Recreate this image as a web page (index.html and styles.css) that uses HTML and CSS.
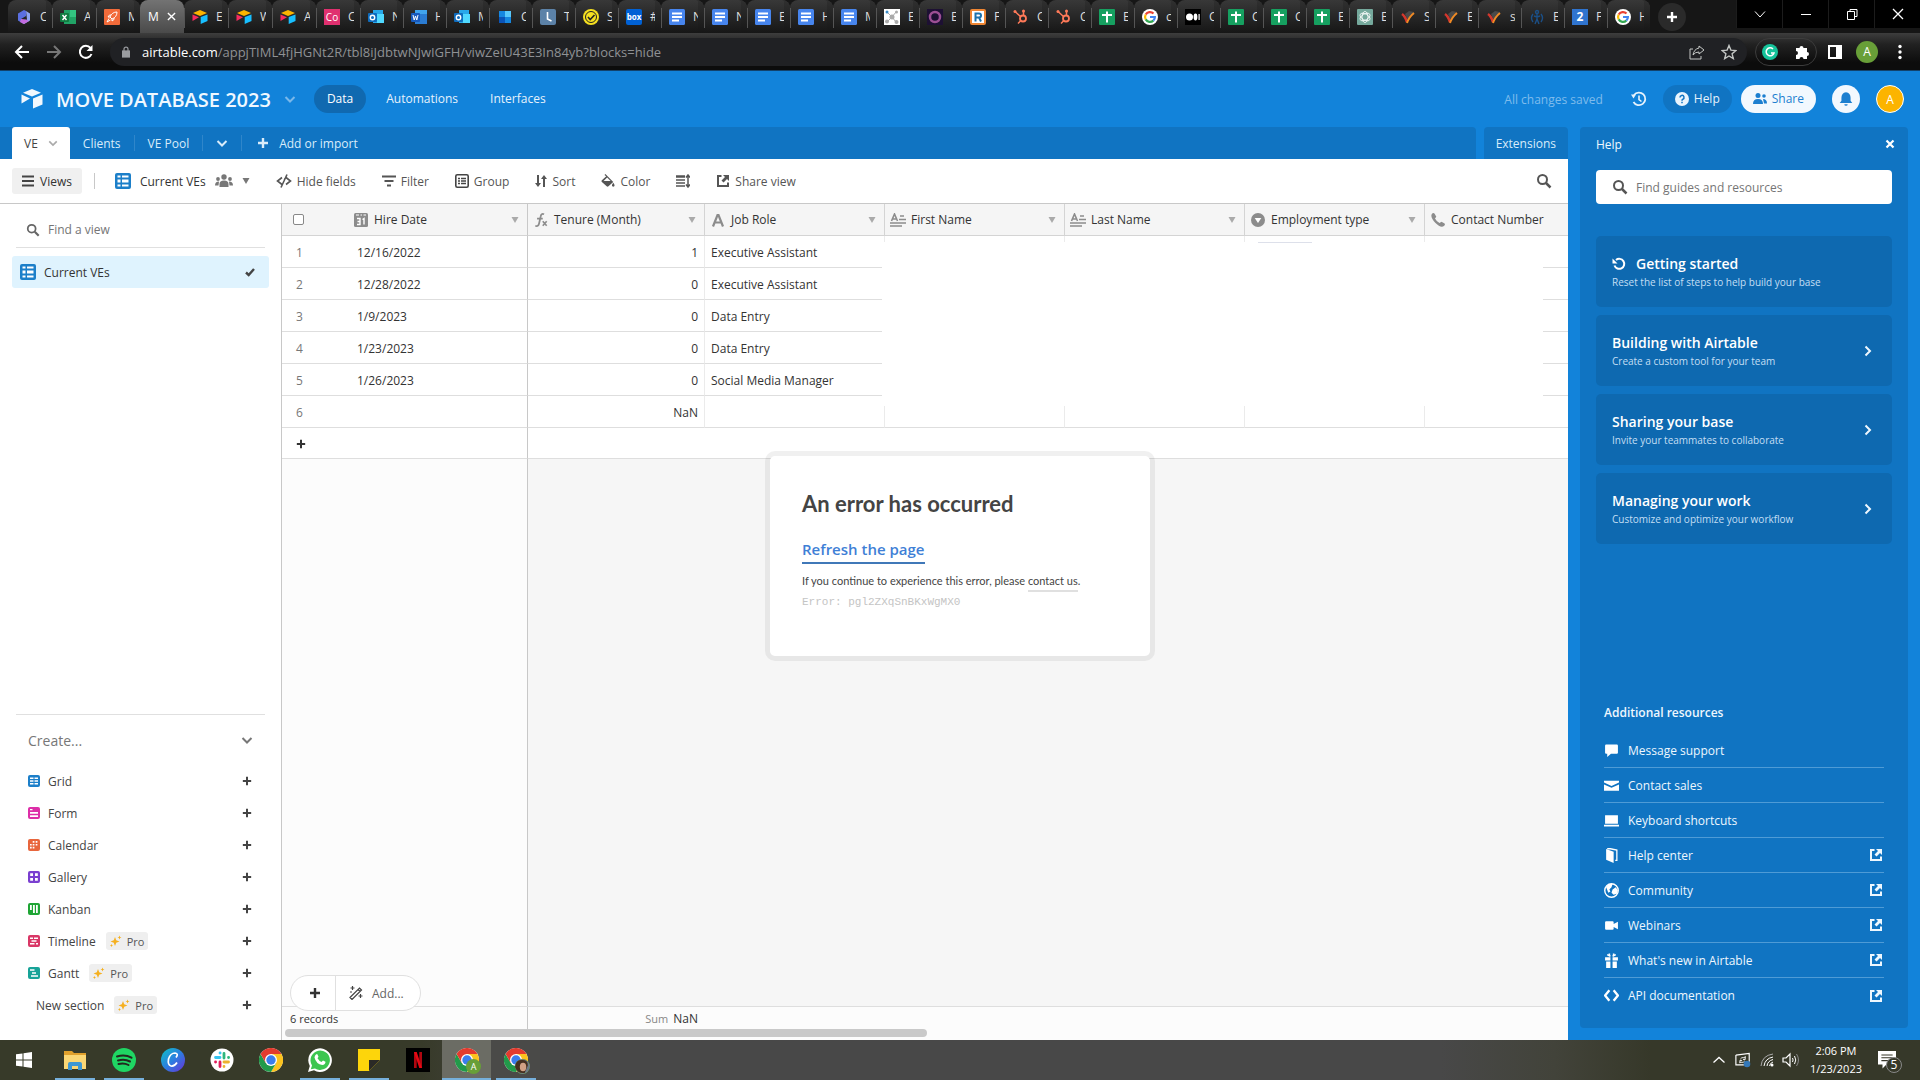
FILE: index.html
```html
<!DOCTYPE html>
<html lang="en">
<head>
    <meta charset="UTF-8">
    <meta name="viewport" content="width=device-width, initial-scale=1.0">
    <title>MOVE DATABASE 2023: VE - Airtable</title>
    <link rel="stylesheet" href="styles.css">
</head>
<body>
    <!-- shared icons -->
    <svg class="sprite" aria-hidden="true">
        <symbol id="i-chevron" viewBox="0 0 12 12"><path d="M1.5 4 6 8.500 10.500 4" fill="none" stroke="currentColor" stroke-width="2"/></symbol>
        <symbol id="i-caret" viewBox="0 0 8 8"><path d="M.5 1h7L4 7z" fill="currentColor"/></symbol>
        <symbol id="i-plus" viewBox="0 0 12 12"><path d="M6 1v10M1 6h10" stroke="currentColor" stroke-width="2.400"/></symbol>
        <symbol id="i-search" viewBox="0 0 16 16"><circle cx="6.500" cy="6.500" r="4.500" fill="none" stroke="currentColor" stroke-width="2"/><path d="m10 10 4.500 4.500" stroke="currentColor" stroke-width="2.500"/></symbol>
        <symbol id="i-right" viewBox="0 0 12 12"><path d="m3.500 1.500 4.500 4.500-4.500 4.500" fill="none" stroke="currentColor" stroke-width="2"/></symbol>
        <symbol id="i-ext" viewBox="0 0 14 14"><path d="M5.500 2H2v10h10V8.500" fill="none" stroke="currentColor" stroke-width="2"/><path d="M7 1h6v6l-2-2-3.500 3.500-2-2L9 3z" fill="currentColor"/></symbol>
        <symbol id="i-grid" viewBox="0 0 16 16"><rect width="16" height="16" rx="2" fill="#1c7fc9"/><path d="M2.500 2.500h3v2h-3zm4.500 0h6.500v2H7zM2.500 6.500h3v3h-3zm4.500 0h6.500v3H7zm-4.500 5h3v2h-3zm4.500 0h6.500v2H7z" fill="#fff"/></symbol>
        <symbol id="i-text" viewBox="0 0 16 14"><path d="m1.500 8 3-7 3 7M2.500 6h4M10 3h4M9 6.500h7M0 10h16M0 13h12" fill="none" stroke="currentColor" stroke-width="1.600"/></symbol>
        <symbol id="i-star" viewBox="0 0 12 12"><path d="m5 2 1.200 3.300L9.500 6.500 6.200 7.700 5 11 3.800 7.700.5 6.500l3.300-1.200zM9.500.5l.6 1.400 1.400.6-1.400.6-.6 1.400-.6-1.400L7.500 2.500l1.400-.6zM1.500 9l.5 1 .9.500-.9.500-.5 1-.5-1-1-.5 1-.5z" fill="#f5b020"/></symbol>

        <symbol id="f-excel" viewBox="0 0 16 16"><path d="M4 1h12v14H4z" fill="#21a366"/><path d="M10 1h6v7h-6z" fill="#33c481"/><rect y="4" width="9" height="9" rx="1" fill="#107c41"/><path d="m2.500 6 4 5m0-5-4 5" stroke="#fff" stroke-width="1.400"/></symbol>
        <symbol id="f-airtable" viewBox="0 0 16 16"><path d="m8 1 7 3-7 3-7-3z" fill="#fcb400"/><path d="M8.700 8 15.500 5.500v6.500L8.700 15z" fill="#18bfff"/><path d="M.5 5.500 7 8.300.5 12z" fill="#f82b60"/></symbol>
        <symbol id="f-outlook" viewBox="0 0 16 16"><path d="M5 1h10v13H5z" fill="#28a8ea"/><path d="M9 5h7v9H9z" fill="#50d9ff"/><rect y="4" width="9" height="9" rx="1" fill="#0f6cbd"/><circle cx="4.500" cy="8.500" r="2.200" fill="none" stroke="#fff" stroke-width="1.400"/></symbol>
        <symbol id="f-docs" viewBox="0 0 16 16"><rect width="16" height="16" rx="1.500" fill="#4785ee"/><path d="M3 4.500h10M3 8h10M3 11.500h7" stroke="#fff" stroke-width="1.800"/></symbol>
        <symbol id="f-sheets" viewBox="0 0 16 16"><rect width="16" height="16" rx="1" fill="#16a060"/><path d="M8 2.500v11M3 6h10" stroke="#fff" stroke-width="2"/></symbol>
        <symbol id="f-hub" viewBox="0 0 16 16"><g fill="none" stroke="#ff7a59"><circle cx="10" cy="9.500" r="3" stroke-width="1.800"/><path d="m2 2.500 5.500 5M10.500 2v4.500M7.500 12 5 14.500" stroke-width="1.500"/></g><circle cx="2" cy="2.500" r="1.500" fill="#ff7a59"/><circle cx="10.500" cy="2" r="1.500" fill="#ff7a59"/></symbol>
        <symbol id="f-google" viewBox="0 0 16 16"><circle cx="8" cy="8" r="8" fill="#fff"/><g fill="none" stroke-width="2.200"><path d="M11.500 4.500A4.900 4.900 0 0 0 3.700 5.600" stroke="#ea4335"/><path d="M3.700 5.600a4.900 4.900 0 0 0 0 4.800" stroke="#fbbc05"/><path d="M3.700 10.400a4.900 4.900 0 0 0 7.600 1.200" stroke="#34a853"/><path d="M11.300 11.600A4.900 4.900 0 0 0 12.900 8H8" stroke="#4285f4"/></g></symbol>
        <symbol id="f-check" viewBox="0 0 16 16"><path d="M5 5 9 2l5 1-6 9z" fill="#4a4a4a"/><path d="M2 5q3 2 5 8" fill="none" stroke="#d3372d" stroke-width="2.600"/><path d="M7 14q2-6 7-10" fill="none" stroke="#f08a24" stroke-width="2"/></symbol>
        <symbol id="f-chrome" viewBox="0 0 24 24"><circle cx="12" cy="12" r="12" fill="#fff"/><path d="M12 6h10.400A12 12 0 0 1 12 24l5.200-9z" fill="#fcc31e"/><path d="M1.600 6A12 12 0 0 0 12 24l5.200-9L12 12 6.800 15z" fill="#229a4a"/><path d="M12 12 6.800 15 1.600 6A12 12 0 0 1 22.400 6H12z" fill="#e33b2e"/><circle cx="12" cy="12" r="6" fill="#fff"/><circle cx="12" cy="12" r="4.700" fill="#3b7ded"/></symbol>
    </svg>

    <div class="browser">
        <div class="browser-tabs">
            <div class="btab wide"><svg viewBox="0 0 16 16"><path d="M8 1 2 4.500v7L6 14l-1-4 5-3V2z" fill="#5b6fe0"/><path d="m10 2 4 2.500v7L8 15l-2-1 5-3.500z" fill="#8fa5f2"/><path d="m5 10-1 3 4 2 5-3-3-1.500z" fill="#c36be0"/></svg>C</div>
            <div class="btab wide"><svg><use href="#f-excel"/></svg>A</div>
            <div class="btab wide"><svg viewBox="0 0 16 16"><rect width="16" height="16" rx="1" fill="#f26b3a"/><path d="M13 3q-5 0-7 5l2 2q5-2 5-7zM6 8H4l1.500-2H7m1 4v2l2-1.500V9M5 9.500 3 13l3.500-2" fill="none" stroke="#fff"/></svg>M</div>
            <div class="btab wide active">M<button type="button" aria-label="Close tab"><svg viewBox="0 0 10 10"><path d="m1 1 8 8m0-8-8 8" stroke="#fff" stroke-width="1.500"/></svg></button></div>
            <div class="btab wide"><svg><use href="#f-airtable"/></svg>E</div>
            <div class="btab wide"><svg><use href="#f-airtable"/></svg>W</div>
            <div class="btab wide"><svg><use href="#f-airtable"/></svg>A</div>
            <div class="btab wide"><span class="fav pink">Co</span>C</div>
            <div class="btab"><svg><use href="#f-outlook"/></svg>N</div>
            <div class="btab"><svg viewBox="0 0 16 16"><path d="M4 1h12v14H4z" fill="#2b7cd3"/><path d="M4 1h12v4H4z" fill="#41a5ee"/><rect y="4" width="9" height="9" rx="1" fill="#185abd"/><path d="m2 6 1.200 5L4.500 7l1.300 4L7 6" fill="none" stroke="#fff"/></svg>H</div>
            <div class="btab"><svg><use href="#f-outlook"/></svg>M</div>
            <div class="btab"><svg viewBox="0 0 16 16"><path d="M2 2h6v6H2zm6 6h6v6H8z" fill="#1687e0"/><path d="M8 2h6v6H8z" fill="#59c8fa"/><path d="M2 8h6v6H2z" fill="#0b54b8"/></svg>C</div>
            <div class="btab"><svg viewBox="0 0 16 16"><rect width="16" height="16" rx="2" fill="#5c82a8"/><path d="M7.500 3v7l4 2" fill="none" stroke="#fff" stroke-width="1.600"/></svg>T</div>
            <div class="btab"><svg viewBox="0 0 16 16"><circle cx="8" cy="8" r="8" fill="#f5e020"/><circle cx="8" cy="8" r="5.500" fill="none" stroke="#222"/><path d="m5 8 2.200 2.500L11.500 6" fill="none" stroke="#222" stroke-width="1.600"/></svg>S</div>
            <div class="btab"><span class="fav boxblue">box</span>#</div>
            <div class="btab"><svg><use href="#f-docs"/></svg>N</div>
            <div class="btab"><svg><use href="#f-docs"/></svg>N</div>
            <div class="btab"><svg><use href="#f-docs"/></svg>E</div>
            <div class="btab"><svg><use href="#f-docs"/></svg>H</div>
            <div class="btab"><svg><use href="#f-docs"/></svg>M</div>
            <div class="btab"><svg viewBox="0 0 16 16"><path d="M0 0h16v16H0z" fill="#fff"/><path d="m3 3 5 5-5 5m5-5 4 5M8 8l4-5" fill="none" stroke="#aaa"/><g fill="#aaa"><circle cx="8" cy="8" r="2.500"/><circle cx="3" cy="12.500" r="2"/><circle cx="12.500" cy="13" r="2"/><circle cx="12.500" cy="3" r="1.500"/></g><circle cx="3" cy="3" r="1.500" fill="#3c8dc8"/></svg>E</div>
            <div class="btab"><svg viewBox="0 0 16 16"><path d="M0 0h16v16H0z" fill="#1d1033"/><circle cx="8" cy="8" r="5" fill="none" stroke="#9c4f94" stroke-width="2.500"/></svg>E</div>
            <div class="btab"><svg viewBox="0 0 16 16"><rect x="1" y="1" width="14" height="14" rx="1" fill="#fff" stroke="#ef8633" stroke-width="2"/><path d="M5.500 12.500V4.500h3.500a2 2 0 0 1 0 4H5.500m3.500 0 2 4" fill="none" stroke="#1b72ad" stroke-width="2"/></svg>F</div>
            <div class="btab"><svg><use href="#f-hub"/></svg>C</div>
            <div class="btab"><svg><use href="#f-hub"/></svg>C</div>
            <div class="btab"><svg><use href="#f-sheets"/></svg>E</div>
            <div class="btab"><svg><use href="#f-google"/></svg>c</div>
            <div class="btab"><svg viewBox="0 0 16 16"><path d="M0 0h16v16H0z"/><g fill="#fff"><circle cx="4.500" cy="8" r="3.500"/><ellipse cx="10.500" cy="8" rx="1.900" ry="3.400"/><path d="M13.500 5h1.200v6h-1.200z"/></g></svg>C</div>
            <div class="btab"><svg><use href="#f-sheets"/></svg>C</div>
            <div class="btab"><svg><use href="#f-sheets"/></svg>C</div>
            <div class="btab"><svg><use href="#f-sheets"/></svg>E</div>
            <div class="btab"><svg viewBox="0 0 16 16"><rect width="16" height="16" rx="1" fill="#75a99c"/><g fill="none" stroke="#fff" stroke-width=".8"><ellipse cx="8" cy="8" rx="3" ry="5.500"/><ellipse cx="8" cy="8" rx="3" ry="5.500" transform="rotate(60 8 8)"/><ellipse cx="8" cy="8" rx="3" ry="5.500" transform="rotate(120 8 8)"/></g></svg>E</div>
            <div class="btab"><svg><use href="#f-check"/></svg>S</div>
            <div class="btab"><svg><use href="#f-check"/></svg>E</div>
            <div class="btab"><svg><use href="#f-check"/></svg>s</div>
            <div class="btab"><svg viewBox="0 0 16 16"><g fill="none" stroke="#1b4f86" stroke-width="1.400"><circle cx="8" cy="3" r="1.500"/><path d="M8 5v5l-2 5m2-5 2 5M4 5q-3 4 0 8m8-8q3 4 0 8M5 7l3 1 3-1"/></g></svg>E</div>
            <div class="btab"><span class="fav bluetwo">2</span>F</div>
            <div class="btab last"><svg><use href="#f-google"/></svg>H</div>
            <button type="button" class="new-tab" aria-label="New tab"><svg><use href="#i-plus"/></svg></button>
            <div class="window-buttons">
                <button type="button" aria-label="Search tabs"><svg viewBox="0 0 12 12"><path d="M1 3.500 6 9l5-5.500" fill="none" stroke="#fff"/></svg></button>
                <button type="button" aria-label="Minimize"><svg viewBox="0 0 12 12"><path d="M1 6.500h10" stroke="#fff"/></svg></button>
                <button type="button" aria-label="Restore"><svg viewBox="0 0 12 12"><path d="M1.500 3.500h7v8h-7zM4 3.500v-2h7v7H8.500" fill="none" stroke="#fff"/></svg></button>
                <button type="button" aria-label="Close"><svg viewBox="0 0 12 12"><path d="m1 1 10 10m0-10L1 11" stroke="#fff" stroke-width="1.300"/></svg></button>
            </div>
        </div>
        <div class="browser-nav">
            <button type="button" aria-label="Back"><svg viewBox="0 0 16 16"><path d="M15 8H2m6-6L2 8l6 6" fill="none" stroke="#fff" stroke-width="2"/></svg></button>
            <button type="button" aria-label="Forward"><svg viewBox="0 0 16 16"><path d="M1 8h13M8 2l6 6-6 6" fill="none" stroke="#777" stroke-width="2"/></svg></button>
            <button type="button" aria-label="Reload"><svg viewBox="0 0 16 16"><path d="M13.500 10A6 6 0 1 1 12.500 4" fill="none" stroke="#fff" stroke-width="2"/><path d="M14.500 1v6H8.500z" fill="#fff"/></svg></button>
            <div class="url-bar">
                <svg class="lock" viewBox="0 0 10 14"><path d="M0 5h10v9H0z" fill="#9a9ca0"/><path d="M2.500 6V3.500a2.500 2.500 0 0 1 5 0V6" fill="none" stroke="#9a9ca0" stroke-width="1.500"/></svg>
                <span class="url"><b>airtable.com</b>/appjTIML4fjHGNt2R/tbl8iJdbtwNJwIGFH/viwZeIU43E3In84yb?blocks=hide</span>
                <button type="button" aria-label="Share page"><svg viewBox="0 0 16 16"><path d="M4 5H1v10h11v-3M10 2l5 4-5 4V8q-4 0-6 3 1-6 6-7z" fill="none" stroke="#c4c7c5"/></svg></button>
                <button type="button" aria-label="Bookmark"><svg viewBox="0 0 16 16"><path d="m8 1.500 1.900 4.600 5 .4-3.800 3.300 1.200 4.800L8 12l-4.300 2.600 1.200-4.800L1.100 6.500l5-.4z" fill="none" stroke="#c4c7c5" stroke-width="1.400"/></svg></button>
            </div>
            <div class="ext-pill">
                <svg viewBox="0 0 16 16"><circle cx="8" cy="8" r="8" fill="#15c39a"/><path d="M11 5a4 4 0 1 0 1 4H9" fill="none" stroke="#fff" stroke-width="1.500"/></svg>
                <svg viewBox="0 0 16 16"><path d="M2 4h3.500a2 2 0 1 1 4 0H13v4a2 2 0 1 1 0 4v3H9.500a2 2 0 0 0-4 0H2v-4a2 2 0 0 0 0-4z" fill="#fff"/></svg>
            </div>
            <svg class="panel-ic" viewBox="0 0 14 14"><path d="M1 1h12v12H1z" fill="none" stroke="#fff" stroke-width="2"/><path d="M8 1h5v12H8z" fill="#fff"/></svg>
            <span class="profile">A</span>
            <svg class="dots" viewBox="0 0 4 16"><g fill="#fff"><circle cx="2" cy="2.500" r="1.700"/><circle cx="2" cy="8" r="1.700"/><circle cx="2" cy="13.500" r="1.700"/></g></svg>
        </div>
    </div>

    <div class="app">
        <header class="app-header">
            <svg class="logo" viewBox="0 0 22 20"><g fill="#f2f8fd"><path d="m11 0 9 3.800-9 3.800-9-3.800z"/><path d="m12 9.500 9.500-4v10L12 19.500z"/><path d="m.5 5.500 8.500 4-8.500 5z"/></g></svg>
            <h1>MOVE DATABASE 2023</h1>
            <svg class="title-chevron"><use href="#i-chevron"/></svg>
            <nav>
                <a href="#" class="current">Data</a>
                <a href="#">Automations</a>
                <a href="#">Interfaces</a>
            </nav>
            <span class="saved">All changes saved</span>
            <button type="button" class="history" aria-label="History"><svg viewBox="0 0 16 16"><path d="M3 4a6.300 6.300 0 1 1-.5 7" fill="none" stroke="#e6f2fc" stroke-width="1.800"/><path d="M0 3.500h5L2.500 7.500z" fill="#e6f2fc"/><path d="M8 4.500V8.500l2.500 2" fill="none" stroke="#e6f2fc" stroke-width="1.600"/></svg></button>
            <button type="button" class="help-btn"><svg viewBox="0 0 14 14"><circle cx="7" cy="7" r="7" fill="#e9f4fd"/><path d="M5 5.500a2 2 0 1 1 2.800 1.700Q7 7.500 7 8.700M7 9.800v1.500" fill="none" stroke="#1074c2" stroke-width="1.500"/></svg>Help</button>
            <button type="button" class="share-btn"><svg viewBox="0 0 14 14"><g fill="#1c7fd0"><circle cx="5" cy="3.500" r="2.500"/><path d="M0 12q0-5 5-5t5 5z"/><circle cx="11" cy="4" r="1.800"/><path d="M10 7q4 0 4 4.500h-3z"/></g></svg>Share</button>
            <button type="button" class="bell" aria-label="Notifications"><svg viewBox="0 0 14 14"><path d="M7 1q4 .5 4 5v2.500l1.500 2h-11L3 8.500V6q0-4.500 4-5zM5.500 11.500h3a1.500 1.500 0 0 1-3 0z" fill="#1c7fd0"/></svg></button>
            <button type="button" class="avatar">A</button>
        </header>

        <main class="base">
            <div class="table-tabs">
                <div class="tab-strip">
                    <button type="button" class="tab selected">VE<svg><use href="#i-chevron"/></svg></button>
                    <button type="button" class="tab">Clients</button>
                    <button type="button" class="tab">VE Pool</button>
                    <button type="button" class="tab" aria-label="All tables"><svg><use href="#i-chevron"/></svg></button>
                    <button type="button" class="tab add"><svg><use href="#i-plus"/></svg>Add or import</button>
                </div>
                <button type="button" class="extensions">Extensions</button>
            </div>

            <div class="viewbar">
                <button type="button" class="views-btn"><svg class="ic12" viewBox="0 0 12 12"><path d="M0 1.500h12M0 6h12M0 10.500h12" stroke="#444" stroke-width="2"/></svg>Views</button>
                <span class="sep"></span>
                <button type="button" class="view-name"><svg class="ic16"><use href="#i-grid"/></svg>Current VEs
                    <svg class="ic18" viewBox="0 0 18 16"><g fill="#777"><circle cx="9" cy="4" r="2.700"/><path d="M4.500 14V11q0-3.500 4.500-3.500t4.500 3.500v3z"/><circle cx="3" cy="6" r="1.900"/><circle cx="15" cy="6" r="1.900"/><path d="M0 12.500q0-4 4-4L3.500 12.500zM18 12.500q0-4-4-4l.5 4z"/></g></svg>
                    <svg class="ic8"><use href="#i-caret"/></svg></button>
                <button type="button"><svg class="ic16" viewBox="0 0 16 14"><path d="M6 3.500 1.500 7 6 10.500M10 3.500l4.500 3.500-4.500 3.500M11 .5 5 13.500M9 4.500 8 7" fill="none" stroke="#555" stroke-width="1.600"/></svg>Hide fields</button>
                <button type="button"><svg class="ic14" viewBox="0 0 14 12"><path d="M0 1.500h14M2.500 6h9M5 10.500h4" stroke="#555" stroke-width="2.200"/></svg>Filter</button>
                <button type="button"><svg class="ic14" viewBox="0 0 14 14"><rect x=".8" y=".8" width="12.400" height="12.400" rx="1.500" fill="none" stroke="#444" stroke-width="1.600"/><path d="M3 4.500h2m1 0h5M3 7h2m1 0h5M3 9.500h2m1 0h5" stroke="#444" stroke-width="1.400"/></svg>Group</button>
                <button type="button"><svg class="ic12" viewBox="0 0 12 12"><path d="M3 0v8.500M9 12V3.500" stroke="#555" stroke-width="2"/><path d="M0 8h6l-3 4zM6 4h6L9 0z" fill="#555"/></svg>Sort</button>
                <button type="button"><svg class="ic14" viewBox="0 0 16 16"><path d="m5 0 9 9-5.500 5q-1 1-2 0L1 9q-1-1 0-2l5-4.500L4 1zM14 10q3 4 0 4.500-3-.5 0-4.500z" fill="#555"/><path d="m7 4-4 4h8z" fill="#fff"/></svg>Color</button>
                <button type="button" aria-label="Row height"><svg class="ic14" viewBox="0 0 14 14"><path d="M0 2.500h9" stroke="#555" stroke-width="2.500"/><path d="M0 6h9M0 9h9M0 12h9" stroke="#555" stroke-width="1.400"/><path d="M12 2v10m-2-8.500L12 1l2 2.500M10 10.500 12 13l2-2.500" fill="none" stroke="#555" stroke-width="1.500"/></svg></button>
                <button type="button"><svg class="ic14 dark"><use href="#i-ext"/></svg>Share view</button>
                <button type="button" class="bar-search" aria-label="Search"><svg class="ic16"><use href="#i-search"/></svg></button>
            </div>

            <div class="workspace">
                <aside class="sidebar">
                    <label class="find-view"><svg class="ic14"><use href="#i-search"/></svg><input type="text" placeholder="Find a view" aria-label="Find a view"></label>
                    <a href="#" class="view-item"><svg class="ic16"><use href="#i-grid"/></svg>Current VEs<svg class="ic10 tick" viewBox="0 0 10 10"><path d="m1 5.500 2.700 2.500L9 2" fill="none" stroke="#444" stroke-width="2.400"/></svg></a>
                    <div class="create">
                        <button type="button" class="create-head">Create...<svg class="ic12"><use href="#i-chevron"/></svg></button>
                        <button type="button" class="create-row"><svg viewBox="0 0 12 12"><rect width="12" height="12" rx="2" fill="#1c7fc9"/><path d="M2 2.500h3.500V4H2zm4.500 0H10V4H6.500zM2 5.200h3.500v1.500H2zm4.500 0H10v1.500H6.500zM2 8h3.500v1.500H2zm4.500 0H10v1.500H6.500z" fill="#fff"/></svg>Grid<svg class="plus"><use href="#i-plus"/></svg></button>
                        <button type="button" class="create-row"><svg viewBox="0 0 12 12"><rect width="12" height="12" rx="2" fill="#dd2ea8"/><path d="M2 2h2.500v1.200H2zM2 5h8v1.800H2zm0 3.200h8V10H2z" fill="#fff"/></svg>Form<svg class="plus"><use href="#i-plus"/></svg></button>
                        <button type="button" class="create-row"><svg viewBox="0 0 12 12"><rect width="12" height="12" rx="2" fill="#e8663d"/><path d="M4.700 2h1.700v1.700H4.700zm3 0h1.700v1.700H7.700zM2 4.900h1.700v1.700H2zm2.700 0h1.700v1.700H4.700zm3 0h1.700v1.700H7.700zM2 7.800h1.700v1.700H2zm2.700 0h1.700v1.700H4.700z" fill="#fff"/></svg>Calendar<svg class="plus"><use href="#i-plus"/></svg></button>
                        <button type="button" class="create-row"><svg viewBox="0 0 12 12"><rect width="12" height="12" rx="2" fill="#7a3fd0"/><path d="M2.200 2.200H5V5H2.200zm4.800 0h2.800V5H7zM2.200 7H5v2.800H2.200zM7 7h2.800v2.800H7z" fill="#fff"/></svg>Gallery<svg class="plus"><use href="#i-plus"/></svg></button>
                        <button type="button" class="create-row"><svg viewBox="0 0 12 12"><rect width="12" height="12" rx="2" fill="#1fa535"/><path d="M2 2h1.800v5H2zm3 0h1.800v8H5zm3 0h1.800v8H8z" fill="#fff"/></svg>Kanban<svg class="plus"><use href="#i-plus"/></svg></button>
                        <button type="button" class="create-row"><svg viewBox="0 0 12 12"><rect width="12" height="12" rx="2" fill="#d93766"/><path d="M2 2.500h3V4H2zm4 0h4V4H6zM3.500 5.200h5v1.500h-5zM2 8h4.500v1.500H2zm6 0h2v1.500H8z" fill="#fff"/></svg>Timeline<span class="pro"><svg><use href="#i-star"/></svg>Pro</span><svg class="plus"><use href="#i-plus"/></svg></button>
                        <button type="button" class="create-row"><svg viewBox="0 0 12 12"><rect width="12" height="12" rx="2" fill="#17a398"/><path d="M2 2.200h4.500v1.600H2zm2 3h4v1.600H4zm-1 3h7v1.600H3z" fill="#fff"/></svg>Gantt<span class="pro"><svg><use href="#i-star"/></svg>Pro</span><svg class="plus"><use href="#i-plus"/></svg></button>
                        <button type="button" class="create-row section">New section<span class="pro"><svg><use href="#i-star"/></svg>Pro</span><svg class="plus"><use href="#i-plus"/></svg></button>
                    </div>
                </aside>

                <section class="grid">
                    <div class="grid-clip">
                        <table>
                            <colgroup>
                                <col class="c-num"><col class="c-date"><col class="c-tenure"><col class="c-std"><col class="c-std"><col class="c-std"><col class="c-std"><col class="c-std">
                            </colgroup>
                            <thead>
                                <tr>
                                    <th class="num"><input type="checkbox" aria-label="Select all records"></th>
                                    <th class="frozen"><div class="field"><svg viewBox="0 0 14 14"><rect width="14" height="14" rx="1.500" fill="#8c8c8c"/><path d="M2 2h3m1.500 0H8m1.500 0H12" stroke="#fff"/><path d="M3 5.500h3v6H3M3.500 8.500H6M8.500 6.500l1.500-1v6" fill="none" stroke="#fff" stroke-width="1.400"/></svg>Hire Date<svg class="caret"><use href="#i-caret"/></svg></div></th>
                                    <th><div class="field"><svg viewBox="0 0 16 16"><path d="M11.500 1.500Q8.300 0 7.600 4L5.800 12q-.8 4-4.300 2.500M3.500 6.500h6.500" fill="none" stroke="#8c8c8c" stroke-width="2"/><path d="m10 9.500 4.500 5m0-5-4.500 5" stroke="#8c8c8c" stroke-width="1.900"/></svg>Tenure (Month)<svg class="caret"><use href="#i-caret"/></svg></div></th>
                                    <th><div class="field"><svg viewBox="0 0 14 14"><path d="M2 13.500 6.500 2h1L12 13.500M4 9.500h6" fill="none" stroke="#8c8c8c" stroke-width="2.200"/></svg>Job Role<svg class="caret"><use href="#i-caret"/></svg></div></th>
                                    <th><div class="field"><svg><use href="#i-text"/></svg>First Name<svg class="caret"><use href="#i-caret"/></svg></div></th>
                                    <th><div class="field"><svg><use href="#i-text"/></svg>Last Name<svg class="caret"><use href="#i-caret"/></svg></div></th>
                                    <th><div class="field"><svg viewBox="0 0 14 14"><circle cx="7" cy="7" r="7" fill="#8c8c8c"/><path d="M3.700 5h6.600L7 10z" fill="#fff"/></svg>Employment type<svg class="caret"><use href="#i-caret"/></svg></div></th>
                                    <th><div class="field"><svg viewBox="0 0 14 14"><path d="M.8 1q1.700-1.800 3 0l1.500 2.700L4 5.500q1.500 3 4.500 4.500l2-1.300 2.700 1.500q1.500 1 0 2.500Q10 15.500 4.500 10T.8 1z" fill="#8c8c8c"/></svg>Contact Number</div></th>
                                </tr>
                            </thead>
                            <tbody>
                                <tr><td class="num">1</td><td class="frozen">12/16/2022</td><td class="right">1</td><td>Executive Assistant</td><td></td><td></td><td></td><td></td></tr>
                                <tr><td class="num">2</td><td class="frozen">12/28/2022</td><td class="right">0</td><td>Executive Assistant</td><td></td><td></td><td></td><td></td></tr>
                                <tr><td class="num">3</td><td class="frozen">1/9/2023</td><td class="right">0</td><td>Data Entry</td><td></td><td></td><td></td><td></td></tr>
                                <tr><td class="num">4</td><td class="frozen">1/23/2023</td><td class="right">0</td><td>Data Entry</td><td></td><td></td><td></td><td></td></tr>
                                <tr><td class="num">5</td><td class="frozen">1/26/2023</td><td class="right">0</td><td>Social Media Manager</td><td></td><td></td><td></td><td></td></tr>
                                <tr><td class="num">6</td><td class="frozen"></td><td class="right">NaN</td><td></td><td></td><td></td><td></td><td></td></tr>
                                <tr class="add-row"><td class="num"><button type="button" aria-label="Add record"><svg class="ic10"><use href="#i-plus"/></svg></button></td><td class="frozen"></td><td colspan="6"></td></tr>
                            </tbody>
                        </table>
                        <div class="redacted"></div>
                    </div>
                    <div class="grid-empty">
                        <div class="pane-left"></div>
                        <div class="pane-right"></div>
                    </div>
                    <div class="summary">
                        <div class="count">6 records</div>
                        <div class="sum"><span>Sum</span>NaN</div>
                    </div>
                    <div class="hscroll"></div>
                    <div class="add-pill">
                        <button type="button" aria-label="Add record"><svg class="ic12"><use href="#i-plus"/></svg></button>
                        <button type="button" class="wand"><svg class="ic14" viewBox="0 0 14 14"><path d="m1 11.500 9.500-9.500 2 2L3 13.500zM9 3.500l2 2M3.500 0v4m-2-2h4M11.500 8v4m-2-2h4M1 6h2" fill="none" stroke="#444" stroke-width="1.200"/></svg>Add...</button>
                    </div>
                </section>
            </div>
        </main>

        <aside class="help">
            <div class="help-head"><h2>Help</h2><button type="button" aria-label="Close help"><svg class="ic10" viewBox="0 0 10 10"><path d="m1.500 1.500 7 7m0-7-7 7" stroke="#fff" stroke-width="2.200"/></svg></button></div>
            <label class="help-search"><svg class="ic16"><use href="#i-search"/></svg><input type="text" placeholder="Find guides and resources" aria-label="Find guides and resources"></label>
            <div class="cards">
                <a href="#" class="card"><div><h3><svg viewBox="0 0 14 14"><path d="M4 3a5 5 0 1 1-1.500 5.500" fill="none" stroke="#fff" stroke-width="2"/><path d="M.5 1.500v5h5z" fill="#fff"/></svg>Getting started</h3><p>Reset the list of steps to help build your base</p></div></a>
                <a href="#" class="card"><div><h3>Building with Airtable</h3><p>Create a custom tool for your team</p></div><svg class="ic12"><use href="#i-right"/></svg></a>
                <a href="#" class="card"><div><h3>Sharing your base</h3><p>Invite your teammates to collaborate</p></div><svg class="ic12"><use href="#i-right"/></svg></a>
                <a href="#" class="card"><div><h3>Managing your work</h3><p>Customize and optimize your workflow</p></div><svg class="ic12"><use href="#i-right"/></svg></a>
            </div>
            <div class="resources">
                <h4>Additional resources</h4>
                <a href="#"><svg viewBox="0 0 14 14"><path d="M2 1.500h10q1 0 1 1V9q0 1-1 1H6.500L3 13v-3H2Q1 10 1 9V2.500q0-1 1-1z" fill="#fff"/></svg>Message support</a>
                <a href="#"><svg viewBox="0 0 14 14"><path d="M0 2.500h14v1.800L7 7.500 0 4.300zM0 6l7 3.200L14 6v6H0z" fill="#fff"/></svg>Contact sales</a>
                <a href="#"><svg viewBox="0 0 14 14"><path d="M1 2h12v8H1zM0 11h14v1.500H0z" fill="#fff"/></svg>Keyboard shortcuts</a>
                <a href="#"><svg viewBox="0 0 14 14"><path d="m2 1 7 2.500V14L2 11z" fill="#fff"/><path d="M3 .7h3L12 2v9.500h-1.500" fill="none" stroke="#fff" stroke-width="1.200"/></svg>Help center<svg class="ext"><use href="#i-ext"/></svg></a>
                <a href="#"><svg viewBox="0 0 14 14"><circle cx="7" cy="7" r="6.300" fill="none" stroke="#fff" stroke-width="1.300"/><path d="M2 4q3-4 6-3L7 4 5 6l1 2-2 1zM8 6l3-2 2 3-1 3-3 1-2-2z" fill="#fff"/></svg>Community<svg class="ext"><use href="#i-ext"/></svg></a>
                <a href="#"><svg viewBox="0 0 14 14"><path d="M2 3h6q1 0 1 1v1.500L13 3.500v7L9 8.500V10q0 1-1 1H2q-1 0-1-1V4q0-1 1-1z" fill="#fff"/></svg>Webinars<svg class="ext"><use href="#i-ext"/></svg></a>
                <a href="#"><svg viewBox="0 0 14 14"><path d="M1 4h5v3H1zm7 0h5v3H8zM2 8h4v6H2zm6 0h4v6H8z" fill="#fff"/><path d="M3 1.500 6 3m5-1.500L8 3M5 .5V3M9 .5V3" stroke="#fff" stroke-width="1.500"/></svg>What's new in Airtable<svg class="ext"><use href="#i-ext"/></svg></a>
                <a href="#"><svg viewBox="0 0 14 14"><path d="M5 2 1 7l4 5M9 2l4 5-4 5" fill="none" stroke="#fff" stroke-width="2.200"/></svg>API documentation<svg class="ext"><use href="#i-ext"/></svg></a>
            </div>
        </aside>

        <div class="error-layer">
            <div class="error-box" role="alertdialog" aria-labelledby="errorTitle">
                <h2 id="errorTitle">An error has occurred</h2>
                <a href="#" class="refresh">Refresh the page</a>
                <p>If you continue to experience this error, please <a href="#">contact us</a>.</p>
                <code>Error: pgl2ZXqSnBKxWgMX0</code>
            </div>
        </div>
    </div>

    <footer class="taskbar">
        <button type="button" class="start" aria-label="Start"><svg viewBox="0 0 16 16"><path d="m0 2.300 6.500-.9v6.100H0zm7.500-1L16 0v7.500H7.500zM0 8.500h6.500v6.100L0 13.700zm7.500 0H16V16l-8.500-1.300z" fill="#fff"/></svg></button>
        <button type="button" class="app-btn open" aria-label="File Explorer"><svg viewBox="0 0 24 24"><path d="M1 3h8l2 2h12v16H1z" fill="#e0a02c"/><path d="M1 7h22v14H1z" fill="#fbd775"/><path d="M5 22v-6q0-2 2-2h10q2 0 2 2v6h-4v-4H9v4z" fill="#3e97d3"/></svg></button>
        <button type="button" class="app-btn open" aria-label="Spotify"><svg viewBox="0 0 24 24"><circle cx="12" cy="12" r="12" fill="#1fd663"/><path d="M5 8.500q8-2.500 14.500 1.200M6 12.500q6.500-2 12 1M6.500 16q5.500-1.500 10 1" fill="none" stroke="#22291f" stroke-width="2" stroke-linecap="round"/></svg></button>
        <button type="button" class="app-btn" aria-label="Canva"><svg viewBox="0 0 24 24"><defs><linearGradient id="cv" x2="1" y2="1"><stop offset=".1" stop-color="#14b5c9"/><stop offset=".5" stop-color="#2b7fe0"/><stop offset="1" stop-color="#6b2fd6"/></linearGradient></defs><circle cx="12" cy="12" r="12" fill="url(#cv)"/><path d="M15 9.500q3-4-1-4.500-4.500 0-6.500 6-1 6 2.500 7 3.500.5 6-3.500" fill="none" stroke="#fff" stroke-width="1.700"/></svg></button>
        <button type="button" class="app-btn" aria-label="Slack"><svg viewBox="0 0 24 24"><circle cx="12" cy="12" r="11.500" fill="#fff"/><g fill="none" stroke-width="2.800" stroke-linecap="round"><path d="M10 5h.1M5.500 9.500H10" stroke="#36c5f0"/><path d="M14 5.500V10M18.500 9.500h.1" stroke="#2eb67d"/><path d="M14 14h4.500M14 18.500v.1" stroke="#ecb22e"/><path d="M5.500 14h.1M10 14v4.500" stroke="#e01e5a"/></g></svg></button>
        <button type="button" class="app-btn" aria-label="Chrome"><svg><use href="#f-chrome"/></svg></button>
        <button type="button" class="app-btn open" aria-label="WhatsApp"><svg viewBox="0 0 24 24"><path d="m0 24 1.800-6A11.800 11.800 0 1 1 6 22.300z" fill="#fff"/><path d="m2.800 21.200 1.200-3.800a9.700 9.700 0 1 1 3 3z" fill="#3cc650"/><path d="M8 6.500q1-1 1.500 0l1 2.300-1 1.500q1.500 2.700 4 3.700l1.500-1.500 2.500 1.300q0 3-3.200 3.200Q8 16 6.500 9.500q.2-2 1.500-3z" fill="#fff"/></svg></button>
        <button type="button" class="app-btn open" aria-label="Sticky Notes"><svg viewBox="0 0 24 24"><path d="M1 1h22v11L12 23H1z" fill="#fdd50b"/><path d="M12 12h11L12 23z" fill="#2b2a26"/></svg></button>
        <button type="button" class="app-btn" aria-label="Netflix"><svg viewBox="0 0 24 24"><path d="M0 0h24v24H0z"/><path d="M8 4h2.700v16H8zm5.300 0H16v16h-2.700z" fill="#b00710"/><path d="M8 4h2.700L16 20h-2.700z" fill="#e50914"/></svg></button>
        <button type="button" class="app-btn open focused" aria-label="Chrome, profile A"><svg><use href="#f-chrome"/></svg><span class="badge">A</span></button>
        <button type="button" class="app-btn open second" aria-label="Chrome, second profile"><svg><use href="#f-chrome"/></svg><span class="badge"><svg viewBox="0 0 14 14"><circle cx="7" cy="7" r="7" fill="#6d7a86"/><path d="M0 8q0-8 7-7 5 0 5 5l-3 7q-6 1-9-5z" fill="#46301f"/><ellipse cx="7.500" cy="7.500" rx="3" ry="4" fill="#d2a184"/></svg></span></button>
        <div class="tray">
            <svg class="ic14" viewBox="0 0 14 14"><path d="m1.500 9.500 5.500-5 5.500 5" fill="none" stroke="#fff" stroke-width="1.300"/></svg>
            <svg class="ic18" viewBox="0 0 18 18"><path d="m1 3.500 15-1.800V11M1 3.500v11h9" fill="none" stroke="#fff" stroke-width="1.300"/><path d="M6 8q1-2.500 5-1.500l.5-1.500v3.500H9M11 10q-1 2.500-5 1.500l-.5 1V9.500H8" fill="none" stroke="#fff"/><circle cx="13.500" cy="13.500" r="3.700" fill="#3478b8"/></svg>
            <svg class="ic14" viewBox="0 0 14 14"><g fill="none" stroke="#fff"><path d="M1 13Q2 2.500 13 1" stroke="#aaa"/><path d="M4 13q1-7.500 9-9M7 13q.5-5 6-6.500M9.500 13q.5-3 3.500-4"/></g><circle cx="12" cy="12" r="1.500" fill="#fff"/></svg>
            <svg class="ic18" viewBox="0 0 18 16"><path d="M1 6h3l4-4v12l-4-4H1z" fill="none" stroke="#fff" stroke-width="1.200"/><path d="M10.500 6q1.200 2 0 4m2-6q2.500 4 0 8" fill="none" stroke="#fff"/><path d="M14.500 2q4 6 0 12" fill="none" stroke="#888"/></svg>
            <div class="clock"><span>2:06 PM</span><span>1/23/2023</span></div>
            <div class="notify"><svg viewBox="0 0 16 16"><path d="M0 0h16v12H7.500L4 15.500V12H0z" fill="#fff"/><path d="M3 3.500h10M3 6h10M3 8.500h7" stroke="#373629"/></svg><span>5</span></div>
        </div>
    </footer>
</body>
</html>
```

FILE: styles.css
```css
* {
    box-sizing: border-box;
}

body {
    margin: 0;
    height: 100vh;
    display: flex;
    flex-direction: column;
    overflow: hidden;
    font-family: "Open Sans", "Noto Sans", sans-serif;
    font-size: 12px;
    color: #333;
    background-color: #fff;
}

button {
    border: none;
    padding: 0;
    background: none;
    font: inherit;
    color: inherit;
    cursor: pointer;
    display: flex;
    align-items: center;
    white-space: nowrap;
}

a {
    color: inherit;
    text-decoration: none;
}

h1, h2, h3, h4, p {
    margin: 0;
}

svg {
    flex: none;
    display: block;
}

input {
    font: inherit;
    border: none;
    outline: none;
    background: none;
    padding: 0;
    min-width: 0;
    flex: 1;
}

input::placeholder {
    color: #757575;
    opacity: 1;
}

.sprite {
    width: 0;
    height: 0;
    position: absolute;
}

.ic8 { width: 8px; height: 8px; }
.ic10 { width: 10px; height: 10px; }
.ic12 { width: 12px; height: 12px; }
.ic14 { width: 14px; height: 14px; }
.ic16 { width: 16px; height: 16px; }
.ic18 { width: 18px; height: 16px; }

/* browser window */
.browser {
    flex: none;
    background-color: #121212;
    border-bottom: 1px solid #12426b;
}

.browser-tabs {
    height: 33px;
    display: flex;
    padding-left: 8px;
    background-color: #161616;
}

.btab {
    flex: 0 1 43px;
    display: flex;
    align-items: center;
    gap: 8px;
    padding-left: 8px;
    overflow: hidden;
    position: relative;
    color: #ddd;
    background: linear-gradient(#383838, #161616);
    border-radius: 8px 8px 0 0;
}

.btab.wide {
    flex-basis: 44px;
}

.btab::before {
    content: "";
    position: absolute;
    left: 0;
    top: 8px;
    height: 20px;
    border-left: 1px solid #555;
}

.btab::after {
    content: "";
    position: absolute;
    right: 0;
    top: 0;
    width: 6px;
    height: 33px;
    background: linear-gradient(#303030, #161616);
}

.btab svg {
    width: 16px;
    height: 16px;
}

.btab.active {
    background: linear-gradient(#737373, #4a4a4a);
    color: #fff;
}

.btab.active::before, .btab.active::after, .btab:first-child::before {
    display: none;
}

.btab.active svg {
    width: 9px;
    height: 9px;
}

.fav {
    flex: none;
    width: 16px;
    height: 16px;
    text-align: center;
    line-height: 16px;
    font-size: 10px;
    color: #fff;
}

.fav.pink { background-color: #e0306f; }
.fav.boxblue { background-color: #0061d5; font-size: 8px; font-weight: 700; border-radius: 2px; }
.fav.bluetwo { background-color: #2f74cf; font-size: 12px; font-weight: 700; }

.new-tab {
    width: 28px;
    height: 28px;
    margin: 3px 0 0 8px;
    justify-content: center;
    border-radius: 14px;
    background-color: #2a2a2a;
    color: #fff;
}

.new-tab svg {
    width: 12px;
    height: 12px;
}

.window-buttons {
    display: flex;
    margin-left: auto;
    height: 28px;
    background-color: #000;
}

.window-buttons button {
    width: 46px;
    justify-content: center;
    border-left: 1px solid #1c1c1c;
}

.window-buttons svg {
    width: 12px;
    height: 12px;
}

.browser-nav {
    height: 37px;
    display: flex;
    align-items: center;
    padding: 0 18px 0 14px;
    background: linear-gradient(#3d3d3d, #222 30%, #0c0c0c 80%);
}

.browser-nav > button {
    width: 32px;
}

.browser-nav > button svg {
    width: 16px;
    height: 16px;
}

.url-bar {
    flex: 1;
    display: flex;
    align-items: center;
    height: 28px;
    padding: 0 10px 0 12px;
    border-radius: 14px;
    background-color: #202124;
    color: #8f9194;
    font-size: 13px;
}

.lock {
    width: 8px;
    height: 12px;
    margin-right: 12px;
}

.url {
    flex: 1;
}

.url b {
    font-weight: 400;
    color: #fff;
}

.url-bar button {
    margin-left: 16px;
}

.url-bar button svg {
    width: 16px;
    height: 16px;
}

.ext-pill {
    display: flex;
    align-items: center;
    gap: 16px;
    height: 28px;
    margin-left: 8px;
    padding: 0 6px;
    border: 1px solid #3c3c3c;
    border-radius: 14px;
}

.ext-pill svg {
    width: 16px;
    height: 16px;
}

.panel-ic {
    width: 14px;
    height: 14px;
    margin-left: 11px;
}

.profile {
    width: 22px;
    height: 22px;
    margin: 0 20px 0 14px;
    border-radius: 50%;
    background-color: #689f38;
    color: #fff;
    text-align: center;
    line-height: 22px;
}

.dots {
    width: 4px;
    height: 16px;
}

/* airtable app */
.app {
    flex: 1;
    min-height: 0;
    position: relative;
    display: grid;
    grid-template-columns: minmax(0, 1fr) 328px;
    grid-template-rows: 56px minmax(0, 1fr);
    column-gap: 12px;
    padding-right: 12px;
    background-color: #1283da;
}

.app-header {
    grid-column: 1 / -1;
    display: flex;
    align-items: center;
    padding: 0 4px 0 21px;
    color: #e6f2fc;
}

.logo {
    width: 22px;
    height: 20px;
    margin-right: 13px;
}

h1 {
    font-size: 20px;
    font-weight: 600;
    color: #f0f8ff;
}

.title-chevron {
    width: 12px;
    height: 12px;
    margin: 0 18px 0 13px;
    color: #7ab8ea;
}

nav {
    display: flex;
    gap: 8px;
    flex: 1;
}

nav a, .help-btn, .share-btn {
    height: 28px;
    line-height: 28px;
    padding: 0 12px;
    border-radius: 14px;
}

nav a {
    padding: 0 12px;
}

nav a.current {
    padding: 0 13px;
    background-color: #1069b0;
    color: #fff;
}

.saved {
    color: #7fbcec;
}

.history {
    margin: 0 16px 0 28px;
}

.history svg {
    width: 16px;
    height: 16px;
}

.help-btn, .share-btn {
    gap: 5px;
}

.help-btn {
    background-color: #1074c2;
}

.share-btn {
    margin: 0 16px 0 9px;
    background-color: #f2f8fe;
    color: #1c7fd0;
}

.help-btn svg, .share-btn svg {
    width: 14px;
    height: 14px;
}

.bell, .avatar {
    width: 28px;
    height: 28px;
    justify-content: center;
    border-radius: 50%;
    background-color: #f2f8fe;
}

.bell svg {
    width: 16px;
    height: 16px;
}

.avatar {
    margin-left: 16px;
    background-color: #fcb400;
    border: 1px solid #fff;
    color: #fff;
}

.base {
    display: flex;
    flex-direction: column;
    min-height: 0;
}

.table-tabs {
    flex: none;
    display: flex;
    gap: 8px;
    height: 32px;
    color: #d9ecfa;
}

.tab-strip {
    flex: 1;
    display: flex;
    align-items: center;
    padding-left: 12px;
    background-color: #1074c2;
    border-radius: 0 4px 0 0;
}

.tab {
    padding: 0 13px;
    height: 16px;
    border-right: 1px solid #2f86ca;
}

.tab svg {
    width: 12px;
    height: 12px;
}

.tab.selected {
    height: 32px;
    gap: 10px;
    padding: 0 12px;
    border: none;
    border-radius: 3px 3px 0 0;
    background-color: #fff;
    color: #444;
}

.tab.selected svg {
    width: 10px;
    height: 10px;
    color: #aaa;
}

.tab.add {
    border: none;
    gap: 10px;
    padding-left: 15px;
}

.extensions {
    padding: 0 12px;
    background-color: #1074c2;
    border-radius: 4px 4px 0 0;
}

.viewbar {
    flex: none;
    display: flex;
    align-items: center;
    height: 45px;
    gap: 26px;
    padding: 0 16px 0 12px;
    background-color: #fff;
    border-bottom: 1px solid #c8c8c8;
    color: #555;
}

.viewbar button {
    gap: 5px;
}

.viewbar .views-btn {
    height: 26px;
    gap: 6px;
    padding: 0 10px;
    border-radius: 3px;
    background-color: #f0f0f0;
    color: #333;
}

.sep {
    width: 1px;
    height: 16px;
    margin: 0 -6px 0 -14px;
    background-color: #c8c8c8;
}

.viewbar .view-name {
    gap: 9px;
    color: #333;
}

.view-name .ic8 {
    color: #777;
}

.dark, .bar-search {
    color: #555;
}

.viewbar .bar-search {
    margin-left: auto;
}

.workspace {
    flex: 1;
    min-height: 0;
    display: flex;
    background-color: #fff;
}

/* views sidebar */
.sidebar {
    flex: none;
    width: 282px;
    display: flex;
    flex-direction: column;
    padding: 8px 16px 19px;
    border-right: 1px solid #c8c8c8;
}

.find-view {
    display: flex;
    align-items: center;
    gap: 8px;
    height: 36px;
    padding-left: 10px;
    border-bottom: 1px solid #e0e0e0;
    color: #666;
}

.view-item {
    display: flex;
    align-items: center;
    gap: 8px;
    height: 32px;
    margin: 8px -4px 0;
    padding: 0 14px 0 8px;
    border-radius: 3px;
    background-color: #dff3fe;
}

.tick {
    margin-left: auto;
}

.create {
    margin-top: auto;
    border-top: 1px solid #e0e0e0;
    padding: 9px 12px 0;
}

.create-head {
    width: 100%;
    height: 32px;
    margin-bottom: 9px;
    justify-content: space-between;
    font-size: 14px;
    color: #777;
}

.create-row {
    width: 100%;
    height: 32px;
    gap: 8px;
    color: #444;
}

.create-row > svg {
    width: 12px;
    height: 12px;
}

.create-row .plus {
    width: 10px;
    height: 10px;
    margin: 0 1px 0 auto;
}

.create-row.section {
    padding-left: 8px;
}

.pro {
    display: flex;
    align-items: center;
    gap: 5px;
    height: 18px;
    margin-left: 2px;
    padding: 0 4px;
    border-radius: 3px;
    background-color: #efefef;
    font-size: 11px;
    color: #555;
}

.pro svg {
    width: 12px;
    height: 12px;
}

/* grid view */
.grid {
    flex: 1;
    min-width: 0;
    display: flex;
    flex-direction: column;
    position: relative;
}

.grid-clip {
    flex: none;
    overflow: hidden;
    position: relative;
}

table {
    width: 1322px;
    table-layout: fixed;
    border-collapse: separate;
    border-spacing: 0;
}

.c-num { width: 66px; }
.c-date { width: 180px; }
.c-tenure { width: 177px; }
.c-std { width: 180px; }

th, td {
    height: 32px;
    padding: 1px 6px 0;
    border-right: 1px solid #ebebeb;
    border-bottom: 1px solid #dedede;
    text-align: left;
    font-weight: 400;
    white-space: nowrap;
}

th {
    background-color: #f5f5f5;
    border-color: #d4d4d4;
    padding: 0 8px 0 5px;
}

.num {
    padding-left: 14px;
    padding-right: 0;
    border-right: none;
    color: #777;
}

th.num {
    padding-left: 11px;
}

.frozen {
    border-right-color: #c8c8c8;
}

td.frozen {
    padding-left: 9px;
}

.right {
    text-align: right;
}

.field {
    display: flex;
    align-items: center;
    gap: 5px;
}

.field svg {
    width: 16px;
    height: 14px;
    color: #8c8c8c;
}

.field .caret {
    width: 8px;
    height: 8px;
    margin-left: auto;
    color: #aaa;
}

input[type="checkbox"] {
    appearance: none;
    display: block;
    width: 11px;
    height: 11px;
    margin: 0;
    border: 1px solid #888;
    border-radius: 2px;
    background-color: #fff;
}

.add-row td {
    height: 31px;
    border-right-color: transparent;
}

.add-row button {
    color: #333;
}

.add-row .frozen {
    border-right-color: #c8c8c8;
}

/* blanked out personal details */
.redacted {
    position: absolute;
    left: 600px;
    right: 25px;
    top: 38px;
    height: 164px;
    background-color: #fff;
}

.redacted::before {
    content: "";
    position: absolute;
    left: 376px;
    width: 54px;
    border-top: 1px solid #dde0ea;
}

.grid-empty {
    flex: 1;
    display: flex;
}

.pane-left {
    width: 246px;
    background-color: #fcfcfc;
    border-right: 1px solid #c8c8c8;
}

.pane-right {
    flex: 1;
    background-color: #f6f6f6;
}

.summary {
    flex: none;
    display: flex;
    height: 23px;
    line-height: 23px;
    border-top: 1px solid #dedede;
    background-color: #fcfcfc;
}

.count {
    width: 246px;
    padding-left: 8px;
    border-right: 1px solid #c8c8c8;
    font-size: 11px;
}

.sum {
    width: 176px;
    padding-right: 6px;
    text-align: right;
}

.sum span {
    margin-right: 5px;
    font-size: 11px;
    color: #888;
}

.hscroll {
    flex: none;
    height: 11px;
    padding-left: 3px;
    background-color: #fcfcfc;
}

.hscroll::before {
    content: "";
    display: block;
    width: 50%;
    height: 8px;
    border-radius: 4px;
    background-color: #c9c9c9;
}

.add-pill {
    position: absolute;
    left: 8px;
    bottom: 29px;
    display: flex;
    height: 36px;
    border: 1px solid #e0e0e0;
    border-radius: 18px;
    background-color: #fff;
    color: #333;
}

.add-pill button {
    padding: 0 14px 0 18px;
}

.add-pill .wand {
    gap: 9px;
    padding: 0 16px 0 13px;
    border-left: 1px solid #e0e0e0;
    color: #666;
}

/* help panel */
.help {
    display: flex;
    flex-direction: column;
    margin-bottom: 12px;
    padding: 0 16px 15px;
    border-radius: 4px;
    background-color: #1074c2;
    color: #eef7fe;
}

.help-head {
    display: flex;
    align-items: center;
    justify-content: space-between;
    height: 34px;
}

.help-head h2 {
    font-size: 12px;
    font-weight: 400;
}

.help-head button {
    margin-right: -3px;
}

.help-search {
    display: flex;
    align-items: center;
    gap: 8px;
    height: 34px;
    margin: 9px 0 32px;
    padding: 0 16px;
    border-radius: 4px;
    background-color: #fff;
    color: #555;
}

.cards {
    display: flex;
    flex-direction: column;
    gap: 8px;
}

.card {
    display: flex;
    align-items: center;
    justify-content: space-between;
    height: 71px;
    padding: 0 18px 0 16px;
    border-radius: 5px;
    background-color: #0e69b0;
}

.card h3 {
    display: flex;
    align-items: center;
    gap: 10px;
    font-size: 14px;
    font-weight: 600;
    line-height: 20px;
    color: #fff;
}

.card h3 svg {
    width: 14px;
    height: 14px;
}

.card p {
    font-size: 10px;
    line-height: 16px;
    color: #c4dff4;
}

.resources {
    margin: auto 8px 0;
}

.resources h4 {
    font-size: 12px;
    font-weight: 600;
    line-height: 18px;
    margin-bottom: 11px;
}

.resources a {
    display: flex;
    align-items: center;
    gap: 9px;
    height: 35px;
    border-bottom: 1px solid #4e9bd6;
}

.resources a:last-child {
    border-bottom: none;
}

.resources svg {
    width: 15px;
    height: 15px;
}

.resources .ext {
    width: 14px;
    height: 14px;
    margin-left: auto;
    margin-right: 1px;
}

/* error dialog */
.error-layer {
    position: absolute;
    inset: 0;
    display: flex;
    align-items: center;
    justify-content: center;
}

.error-box {
    width: 390px;
    height: 210px;
    padding: 32px;
    border: 5px solid rgba(0, 0, 0, 0.06);
    border-radius: 10px;
    background-color: #fff;
    background-clip: padding-box;
    color: #444;
}

.error-box h2 {
    font-family: Lato, sans-serif;
    font-size: 22px;
    font-weight: 700;
    line-height: 32px;
    margin-bottom: 18px;
}

.refresh {
    display: inline-block;
    padding-bottom: 2px;
    border-bottom: 2px solid #4078b8;
    font-size: 15px;
    font-weight: 600;
    line-height: 22px;
    color: #3f7fd6;
}

.error-box p {
    margin-top: 7px;
    font-family: Lato, sans-serif;
    font-size: 11px;
    line-height: 20px;
}

.error-box p a {
    padding-bottom: 3px;
    border-bottom: 2px solid #e0e0e0;
}

.error-box code {
    font-family: "Liberation Mono", monospace;
    font-size: 11px;
    line-height: 22px;
    color: #c4c4c4;
}

/* windows taskbar */
.taskbar {
    flex: none;
    display: flex;
    height: 40px;
    background: linear-gradient(90deg, #373a29, #373a29 22%, #484848 28%, #484848 75%, #42433a 81%, #363829 86%);
    color: #fff;
}

.start {
    width: 50px;
    padding-left: 16px;
}

.start svg {
    width: 16px;
    height: 16px;
}

.app-btn {
    position: relative;
    width: 49px;
    justify-content: center;
}

.app-btn > svg {
    width: 24px;
    height: 24px;
}

.app-btn.open::after {
    content: "";
    position: absolute;
    left: 5px;
    right: 4px;
    bottom: 0;
    height: 2px;
    background-color: #76b0dc;
}

.app-btn.focused {
    background-color: #6b6c64;
}

.app-btn.focused::after {
    left: 0;
    right: 0;
}

.app-btn.second {
    background-color: #4a4a48;
}

.badge {
    position: absolute;
    right: 10px;
    bottom: 6px;
    width: 15px;
    height: 15px;
    border-radius: 50%;
    overflow: hidden;
    background-color: #689f38;
    font-size: 9px;
    line-height: 15px;
}

.tray {
    display: flex;
    align-items: center;
    gap: 8px;
    margin-left: auto;
    padding-right: 18px;
}

.clock {
    display: flex;
    flex-direction: column;
    align-items: center;
    margin: 0 8px 0 2px;
    font-size: 11px;
    line-height: 18px;
}

.notify {
    position: relative;
    padding-right: 6px;
}

.notify svg {
    width: 18px;
    height: 18px;
}

.notify span {
    position: absolute;
    right: 0;
    top: 6px;
    width: 16px;
    height: 16px;
    border: 1px solid #888;
    border-radius: 50%;
    background-color: #363829;
    text-align: center;
    line-height: 14px;
}
```
